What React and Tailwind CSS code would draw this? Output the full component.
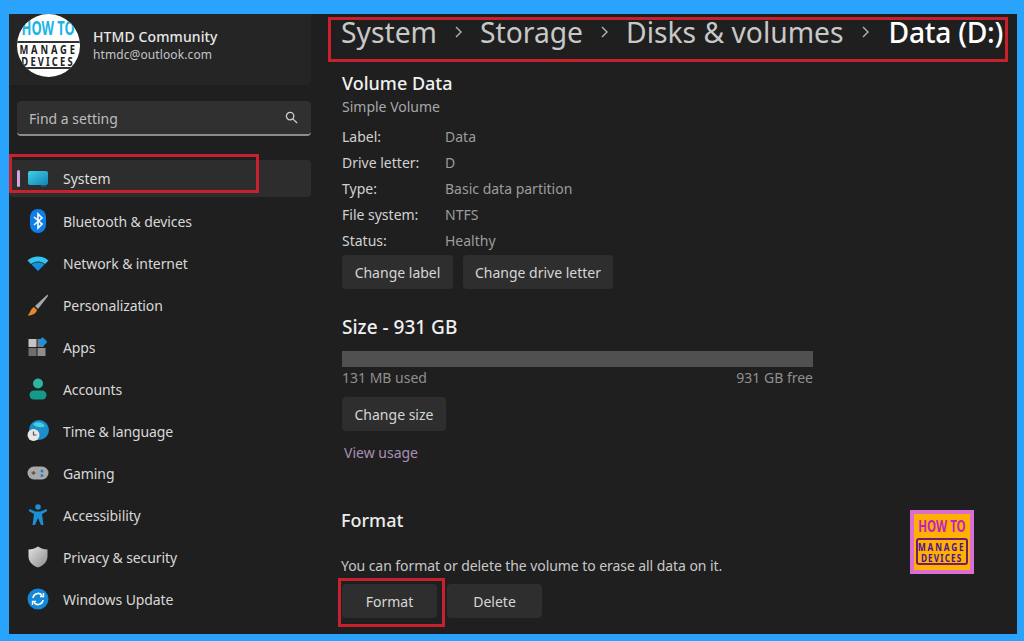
const font = { fontFamily: '"Noto Sans", "Open Sans", sans-serif' };

function SystemIcon() {
    return (
        <svg width="22" height="18" viewBox="0 0 22 18">
            <defs>
                <linearGradient id="sys" x1="0" y1="0" x2="1" y2="1">
                    <stop offset="0" stopColor="#3fd0e4" />
                    <stop offset="1" stopColor="#1583b8" />
                </linearGradient>
            </defs>
            <rect x="1" y="1" width="20" height="14" rx="2" fill="url(#sys)" />
            <rect x="14" y="15" width="5" height="1.5" fill="#0d5f8a" />
        </svg>
    );
}

function BluetoothIcon() {
    return (
        <svg width="18" height="24" viewBox="0 0 18 24">
            <rect x="1" y="0" width="16" height="24" rx="8" fill="#0f7fe8" />
            <path d="M5 8l8 7-4 4V5l4 4-8 7" fill="none" stroke="#fff" strokeWidth="1.6" />
        </svg>
    );
}

function WifiIcon() {
    return (
        <svg width="22" height="16" viewBox="0 0 22 16">
            <path d="M0.5 5.5C6 0 16 0 21.5 5.5L18 9C14 5.5 8 5.5 4 9Z" fill="#35c4f0" />
            <path d="M4.5 9.5C8 6.5 14 6.5 17.5 9.5L11 16Z" fill="#1290dc" />
        </svg>
    );
}

function BrushIcon() {
    return (
        <svg width="22" height="22" viewBox="0 0 22 22">
            <path d="M20.5 0.5L8 12l3 3L21 2Z" fill="#a9a9a9" />
            <path d="M7 13l3 3c-1 4-5 5.500-9.500 5.500C3 20 3 15 7 13Z" fill="#e8862c" />
        </svg>
    );
}

function AppsIcon() {
    return (
        <svg width="20" height="20" viewBox="0 0 20 20">
            <rect x="0.500" y="2" width="8" height="8" fill="#c4c4c4" />
            <rect x="0.500" y="11" width="8" height="8" fill="#6e6e6e" />
            <rect x="9.500" y="11" width="8" height="8" fill="#8e8e8e" />
            <rect x="9.500" y="2" width="6" height="8" fill="#7c7c7c" />
            <rect x="11" y="1.500" width="7" height="7" rx="1" fill="#1f8fd8" transform="rotate(45 14.500 5)" />
        </svg>
    );
}

function AccountsIcon() {
    return (
        <svg width="18" height="22" viewBox="0 0 18 22">
            <circle cx="9" cy="5.500" r="5" fill="#2bb5a0" />
            <rect x="0.500" y="12.500" width="17" height="9" rx="4.500" fill="#149a88" />
        </svg>
    );
}

function TimeIcon() {
    return (
        <svg width="22" height="22" viewBox="0 0 22 22">
            <circle cx="12" cy="10" r="10" fill="#1b8fc9" />
            <path d="M6 4c4-3 10-2 12 2-3 2-9 2-12-2Z" fill="#45cfe0" />
            <circle cx="6.500" cy="15" r="6" fill="#e6e6e6" />
            <path d="M6.500 11.500V15h3" fill="none" stroke="#555" strokeWidth="1.200" />
        </svg>
    );
}

function GamingIcon() {
    return (
        <svg width="22" height="14" viewBox="0 0 22 14">
            <rect x="0.500" y="0.500" width="21" height="13" rx="6.500" fill="#a8a8a8" />
            <path d="M4.500 7h4M6.500 5v4" stroke="#555" strokeWidth="1.300" />
            <circle cx="15" cy="5" r="1.500" fill="#1f7fd0" />
            <circle cx="15" cy="9.500" r="1.500" fill="#1f7fd0" />
        </svg>
    );
}

function AccessibilityIcon() {
    return (
        <svg width="20" height="22" viewBox="0 0 20 22">
            <circle cx="10" cy="3" r="2.800" fill="#1c8fd6" />
            <path d="M1.500 5l6 2.500h5l6-2.500 0.800 2L14 10l1.500 11h-2.500L10 14l-3 7H4.500L6 10 0.700 7Z" fill="#1c8fd6" />
        </svg>
    );
}

function ShieldIcon() {
    return (
        <svg width="20" height="22" viewBox="0 0 20 22">
            <defs>
                <linearGradient id="shield" x1="0" y1="0" x2="1" y2="1">
                    <stop offset="0" stopColor="#e4e4e4" />
                    <stop offset="1" stopColor="#8b8b8b" />
                </linearGradient>
            </defs>
            <path d="M10 0.500c3 2 6 3 9.500 3v7c0 5-4 9-9.500 11C4.500 19.500 0.500 15.500 0.500 10.500v-7C4 3.500 7 2.500 10 0.500Z" fill="url(#shield)" />
        </svg>
    );
}

function UpdateIcon() {
    return (
        <svg width="22" height="22" viewBox="0 0 22 22">
            <circle cx="11" cy="11" r="10.500" fill="#1487d8" />
            <path d="M6 10a5 5 0 0 1 9-2.500M16 12a5 5 0 0 1-9 2.500" fill="none" stroke="#fff" strokeWidth="1.600" />
            <path d="M16.500 5v3.500H13M5.500 17v-3.500H9" fill="none" stroke="#fff" strokeWidth="1.400" />
        </svg>
    );
}

function Chevron() {
    return (
        <svg className="mx-[17px] shrink-0" width="9" height="14" viewBox="0 0 9 14" fill="none" stroke="#b4b4b4" strokeWidth="1.400">
            <path d="M2 2l5 5-5 5" />
        </svg>
    );
}

const navItems = [
    { label: 'Bluetooth & devices', icon: BluetoothIcon },
    { label: 'Network & internet', icon: WifiIcon },
    { label: 'Personalization', icon: BrushIcon },
    { label: 'Apps', icon: AppsIcon },
    { label: 'Accounts', icon: AccountsIcon },
    { label: 'Time & language', icon: TimeIcon },
    { label: 'Gaming', icon: GamingIcon },
    { label: 'Accessibility', icon: AccessibilityIcon },
    { label: 'Privacy & security', icon: ShieldIcon },
    { label: 'Windows Update', icon: UpdateIcon },
];

const volumeInfo = [
    ['Label:', 'Data'],
    ['Drive letter:', 'D'],
    ['Type:', 'Basic data partition'],
    ['File system:', 'NTFS'],
    ['Status:', 'Healthy'],
];

function Avatar() {
    return (
        <div className="w-[63px] h-[63px] rounded-full bg-white overflow-hidden flex flex-col items-center shrink-0 whitespace-nowrap">
            <div className="mt-[4px] h-[20px] text-[19px] leading-[20px] font-bold text-[#19b5e8] scale-x-[0.68]">HOW TO</div>
            <div className="mt-[3px] w-full h-[28px] border-y-2 border-[#333] flex flex-col items-center font-bold text-[#222] text-[13px] leading-[12px]">
                <div className="scale-x-[0.72] tracking-[4px]">MANAGE</div>
                <div className="scale-x-[0.72] tracking-[3px]">DEVICES</div>
            </div>
        </div>
    );
}

function ActionButton({ children, className = '' }) {
    return (
        <button className={`h-[34px] rounded-[4px] bg-[#2e2e2e] text-[14px] text-[#d6d6d6] ${className}`}>
            {children}
        </button>
    );
}

function Logo() {
    return (
        <div className="absolute left-[901px] top-[496px] w-[64px] h-[64px] bg-[#d96fd0] p-[4px] whitespace-nowrap">
            <div className="w-full h-full bg-[#ffb000] flex flex-col items-center pt-[3px]">
                <div className="text-[16px] leading-[18px] font-bold text-[#c21fc0] scale-x-[0.72]">HOW TO</div>
                <div className="mt-[3px] w-[52px] h-[27px] border-2 border-[#6a1f6a] rounded-[3px] flex flex-col items-center justify-center text-[#4b0f9c] text-[11px] leading-[11px] font-bold">
                    <div className="scale-x-[0.75] tracking-[2.500px]">MANAGE</div>
                    <div className="scale-x-[0.75] tracking-[1.500px]">DEVICES</div>
                </div>
            </div>
        </div>
    );
}

export default function App() {
    return (
        <div className="w-[1024px] h-[641px] bg-[#2aa3fd] pt-[14px] pb-[7px] pl-[9px] pr-[7px] overflow-hidden" style={font}>
            <div className="relative w-full h-full bg-[#1f1f1f] flex">
                {/* Sidebar */}
                <div className="w-[302px] shrink-0">
                    <div className="h-[71px] bg-[#252525] rounded-br-[4px] flex items-start pl-[8px]">
                        <Avatar />
                        <div className="ml-[13px] mt-[13px]">
                            <div className="text-[14px] leading-[20px] font-medium text-[#e8e8e8] tracking-[0.1px]">HTMD Community</div>
                            <div className="text-[12px] leading-[16px] text-[#c4c4c4] tracking-[0.1px]">htmdc@outlook.com</div>
                        </div>
                    </div>

                    <div className="mt-[16px] ml-[8px] h-[35px] bg-[#303030] rounded-[4px] border-b-2 border-[#8c8c8c] flex items-center justify-between pl-[12px] pr-[13px]">
                        <span className="pt-[2px] text-[14px] text-[#bdbdbd]">Find a setting</span>
                        <svg width="13" height="13" viewBox="0 0 14 14" fill="none" stroke="#cfcfcf" strokeWidth="1.400">
                            <circle cx="5.500" cy="5.500" r="4" />
                            <path d="M8.500 8.500L13 13" />
                        </svg>
                    </div>

                    <div className="relative mt-[24px] h-[37px] bg-[#2d2d2d] rounded-[4px] flex items-center">
                        <div className="ml-[8px] w-[3px] h-[17px] rounded-full bg-[#d9a2e0]" />
                        <div className="ml-[6px] w-[24px] flex justify-center"><SystemIcon /></div>
                        <span className="ml-[13px] text-[14px] text-[#dedede]">System</span>
                        <div className="absolute left-0 -top-[6px] w-[250px] h-[39px] border-[3px] border-[#c8202c]" />
                    </div>

                    <div className="mt-[3px]">
                        {navItems.map(({ label, icon: Icon }) => (
                            <div key={label} className="h-[42px] flex items-center">
                                <div className="ml-[17px] w-[24px] flex justify-center"><Icon /></div>
                                <span className="ml-[13px] text-[14px] text-[#d8d8d8] tracking-[-0.1px]">{label}</span>
                            </div>
                        ))}
                    </div>
                </div>

                {/* Content */}
                <div className="flex-1 min-w-0 pl-[17px]">
                    <div className="mt-[3px] w-[680px] h-[45px] border-[3px] border-[#c8202c] flex items-center pl-[10px] pb-[16px] text-[28.25px] leading-[36px] text-[#c8c8c8] whitespace-nowrap">
                        <span>System</span>
                        <Chevron />
                        <span>Storage</span>
                        <Chevron />
                        <span>Disks &amp; volumes</span>
                        <Chevron />
                        <span className="ml-[2px] font-medium text-white tracking-[-0.3px]">Data (D:)</span>
                    </div>

                    <div className="pl-[14px]">
                        <div className="mt-[9px] text-[18px] leading-[24px] font-medium text-[#f0f0f0]">Volume Data</div>
                        <div className="mt-[2px] text-[14px] leading-[20px] text-[#a8a8a8]">Simple Volume</div>

                        <div className="mt-[6px]">
                            {volumeInfo.map(([label, value]) => (
                                <div key={label} className="h-[26px] flex items-center text-[14px]">
                                    <span className="w-[103px] text-[#d2d2d2]">{label}</span>
                                    <span className="text-[#9c9c9c]">{value}</span>
                                </div>
                            ))}
                        </div>

                        <div className="mt-[2px] flex gap-[10px]">
                            <ActionButton className="w-[111px]">Change label</ActionButton>
                            <ActionButton className="w-[150px]">Change drive letter</ActionButton>
                        </div>

                        <div className="mt-[24px] text-[19px] leading-[28px] font-medium text-[#f0f0f0]">Size - 931 GB</div>
                        <div className="mt-[10px] w-[471px] h-[16px] bg-[#505050]" />
                        <div className="mt-[1px] w-[471px] flex justify-between text-[14px] leading-[20px] text-[#8f8f8f]">
                            <span>131 MB used</span>
                            <span>931 GB free</span>
                        </div>

                        <ActionButton className="mt-[9px] w-[104px] block">Change size</ActionButton>

                        <div className="mt-[12px] ml-[2px] text-[14px] leading-[20px] text-[#a98fb4]">View usage</div>

                        <div className="mt-[43px] -ml-[1px] text-[18px] leading-[28px] font-medium text-[#ececec]">Format</div>
                        <div className="mt-[22px] -ml-[1px] text-[14px] leading-[20px] text-[#c8c8c8] tracking-[-0.07px]">You can format or delete the volume to erase all data on it.</div>

                        <div className="relative mt-[8px] flex gap-[10px]">
                            <ActionButton className="w-[95px]">Format</ActionButton>
                            <ActionButton className="w-[95px]">Delete</ActionButton>
                            <div className="absolute -left-[4px] -top-[6px] w-[107px] h-[49px] border-[3px] border-[#c8202c]" />
                        </div>
                    </div>
                </div>

                <Logo />
            </div>
        </div>
    );
}
